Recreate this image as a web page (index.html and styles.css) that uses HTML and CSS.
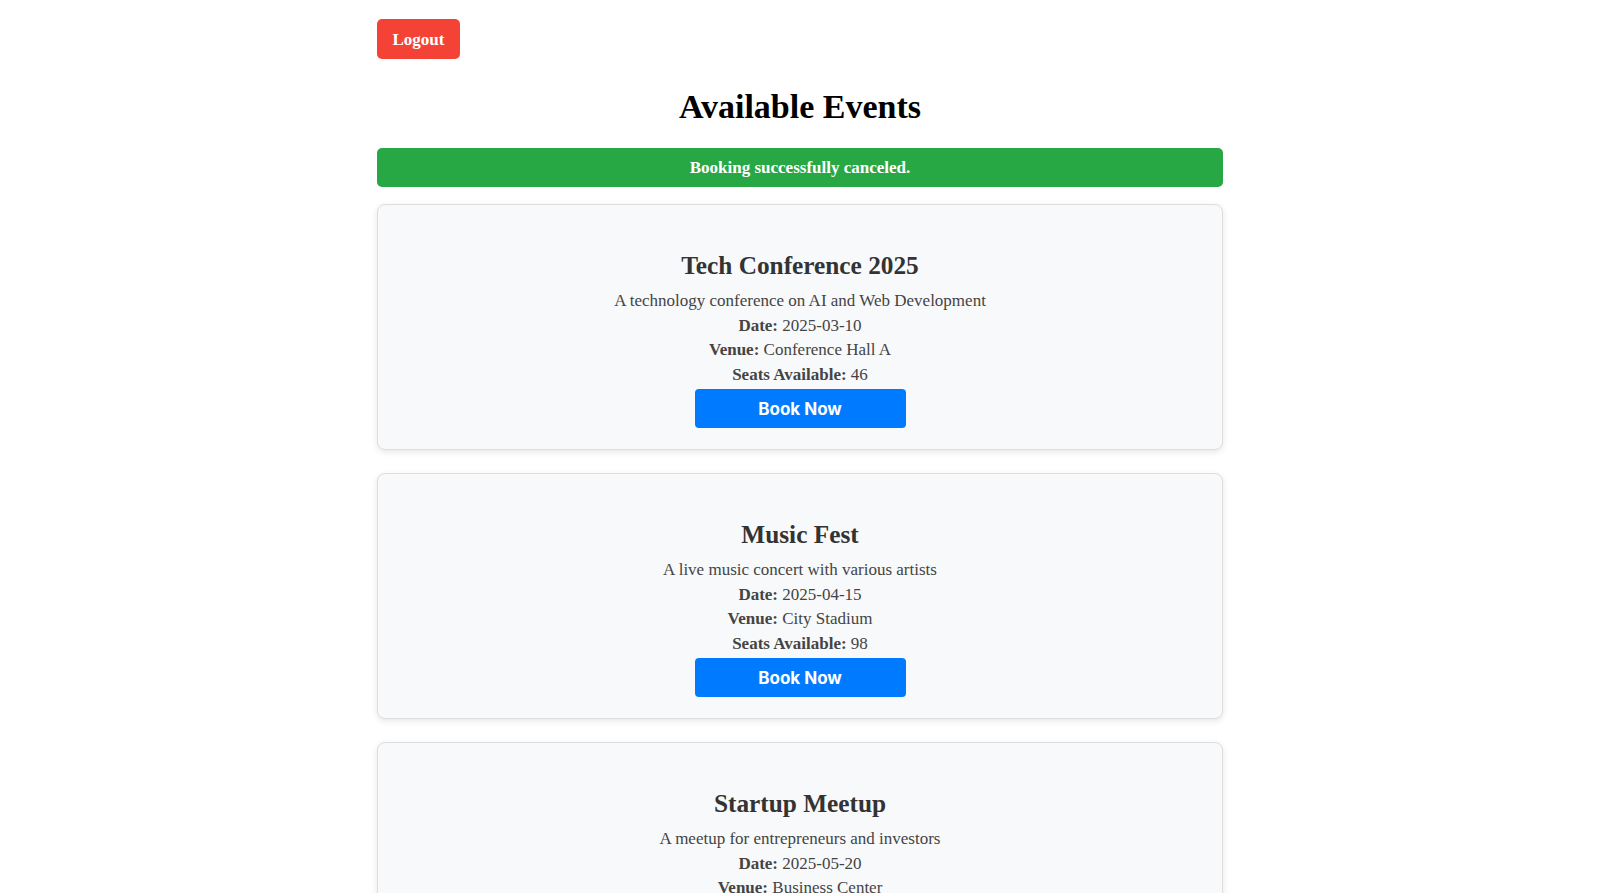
FILE: index.html
```html
<!DOCTYPE html>
<html lang="en">
<head>
<meta charset="utf-8">
<title>Available Events</title>
<link rel="stylesheet" href="styles.css">
</head>
<body>
<div class="container">
  <button class="logout">Logout</button>
  <h1 class="page-title">Available Events</h1>
  <div class="alert-success">Booking successfully canceled.</div>

  <div class="event-card">
    <h2 class="event-title">Tech Conference 2025</h2>
    <p>A technology conference on AI and Web Development</p>
    <p><strong>Date:</strong> 2025-03-10</p>
    <p><strong>Venue:</strong> Conference Hall A</p>
    <p><strong>Seats Available:</strong> 46</p>
    <button class="book-btn">Book Now</button>
  </div>

  <div class="event-card">
    <h2 class="event-title">Music Fest</h2>
    <p>A live music concert with various artists</p>
    <p><strong>Date:</strong> 2025-04-15</p>
    <p><strong>Venue:</strong> City Stadium</p>
    <p><strong>Seats Available:</strong> 98</p>
    <button class="book-btn">Book Now</button>
  </div>

  <div class="event-card">
    <h2 class="event-title">Startup Meetup</h2>
    <p>A meetup for entrepreneurs and investors</p>
    <p><strong>Date:</strong> 2025-05-20</p>
    <p><strong>Venue:</strong> Business Center</p>
    <p><strong>Seats Available:</strong> 30</p>
    <button class="book-btn">Book Now</button>
  </div>
</div>
</body>
</html>
```

FILE: styles.css
```css
html, body {
  margin: 0;
  padding: 0;
  background: #ffffff;
}

body {
  font-family: "Liberation Serif", "Times New Roman", serif;
  font-size: 17px;
  color: #000;
}

.container {
  width: 846px;
  margin: 0 auto;
  padding-top: 19px;
}

.logout {
  display: block;
  box-sizing: border-box;
  height: 40px;
  padding: 2px 15.5px 0;
  background: #f44336;
  color: #fff;
  border: none;
  border-radius: 5px;
  font-family: "Liberation Serif", "Times New Roman", serif;
  font-size: 17px;
  font-weight: bold;
  cursor: pointer;
}

.page-title {
  margin: 29px 0 22px;
  text-align: center;
  font-size: 34px;
  font-weight: bold;
  line-height: 38px;
  color: #000;
}

.alert-success {
  box-sizing: border-box;
  height: 39px;
  padding-top: 1px;
  display: flex;
  align-items: center;
  justify-content: center;
  background: #28a745;
  color: #fff;
  font-weight: bold;
  font-size: 17px;
  border-radius: 5px;
  margin-bottom: 17px;
}

.event-card {
  background: #f8f9fa;
  border: 1px solid #dedede;
  border-radius: 8px;
  box-shadow: 0 2px 6px rgba(0, 0, 0, 0.1);
  padding: 20px 20px 21px;
  margin-bottom: 23px;
  text-align: center;
  color: #444;
}

.event-title {
  margin: 26px 0 12px;
  font-size: 25.3px;
  line-height: 28px;
  font-weight: bold;
  color: #333;
}

.event-card p {
  margin: 5px 0;
  font-size: 17px;
  line-height: 19.5px;
}

.book-btn {
  display: flex;
  align-items: center;
  justify-content: center;
  width: 211px;
  height: 39px;
  margin: 5px auto 0;
  padding: 0;
  background: #007bff;
  color: #fff;
  border: none;
  border-radius: 4px;
  font-family: Inter, "Liberation Sans", sans-serif;
  font-size: 17px;
  font-weight: 700;
  cursor: pointer;
}
```
